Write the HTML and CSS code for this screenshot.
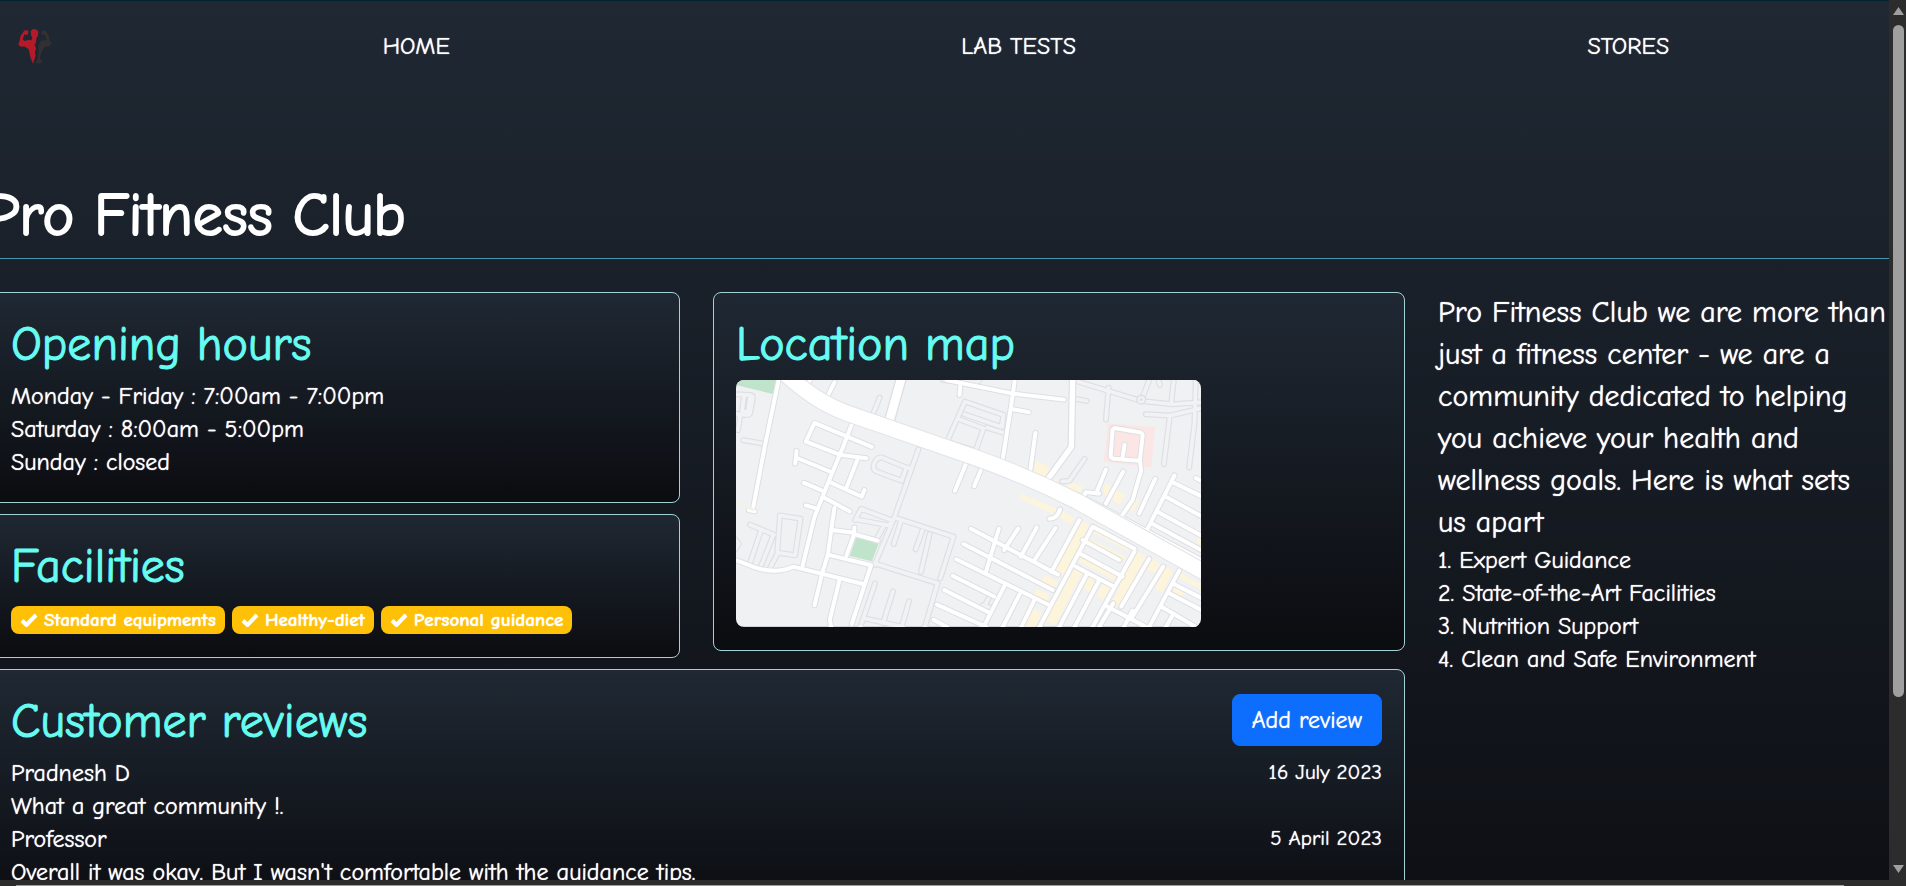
FILE: index.html
```html
<!DOCTYPE html>
<html lang="en">
<head>
<meta charset="utf-8">
<title>Pro Fitness Club</title>
<link rel="stylesheet" href="styles.css">
</head>
<body>
<div class="window">
  <div class="page">
    <nav class="navbar">
      <svg class="logo" viewBox="54 52 102 106" role="img" aria-label="Pro Fitness Club logo">
        <path fill="#b51a28" d="M72 57 L80 55 L85 59 L84 68 L77 70 L73 68 L70 76 L68 84 L74 88 L84 85 L94 86 L97 79 L93 70 L92 58 L99 52 L111 54 L115 61 L114 72 L109 81 L108 94 L104 99 L108 110 L105 124 L107 132 L99 157 L92 140 L88 124 L86 113 L75 106 L61 105 L54 99 L58 90 L61 74 Z"/>
        <path fill="#343031" d="M124 60 L130 56 L139 59 L147 74 L149 84 L155 96 L148 104 L135 106 L128 115 L123 128 L120 140 L127 153 L118 157 L107 154 L112 144 L115 128 L116 116 L115 103 L121 90 L132 86 L140 87 L138 76 L134 69 L126 70 Z"/>
      </svg>
      <div class="nav-links">
        <a href="#home">HOME</a>
        <a href="#tests">LAB TESTS</a>
        <a href="#stores">STORES</a>
      </div>
    </nav>
    <header class="title"><h1>Pro Fitness Club</h1></header>
    <main class="content">
      <div class="stack">
        <section class="card">
          <h2>Opening hours</h2>
          <p>Monday - Friday : 7:00am - 7:00pm</p>
          <p>Saturday : 8:00am - 5:00pm</p>
          <p>Sunday : closed</p>
        </section>
        <section class="card">
          <h2>Facilities</h2>
          <div class="badges">
            <span class="badge"><svg class="check" viewBox="0 0 18 14"><path d="M2 7.500 L6.500 12 L16 2"/></svg>Standard equipments</span>
            <span class="badge"><svg class="check" viewBox="0 0 18 14"><path d="M2 7.500 L6.500 12 L16 2"/></svg>Healthy-diet</span>
            <span class="badge"><svg class="check" viewBox="0 0 18 14"><path d="M2 7.500 L6.500 12 L16 2"/></svg>Personal guidance</span>
          </div>
        </section>
      </div>
      <section class="card">
        <h2>Location map</h2>
        <svg class="map" viewBox="108 299 1398 742" role="img" aria-label="Street map">
          <defs>
            <g id="lanes">
              <path d="M108 342 L152 344 Q160 346 158 358 L150 400 Q148 408 120 402 M132 350 L126 392 L144 396 L150 350 M112 400 L120 410 L114 450 M130 480 L196 491"/>
              <path d="M520 400 L540 352 M740 490 L796 364 L912 404 L906 440 L794 402 M776 416 L852 445 L828 512 L744 486 M862 442 L914 458 M912 404 L908 440"/>
              <path d="M546 532 L620 562 L606 602 L530 574 Q516 566 524 548 Q532 530 546 532 M656 508 L584 712 L524 855 M620 562 L634 566 M466 720 L484 686 L580 722 L566 736 L470 718 M584 712 L762 770 L722 895 M552 738 L528 782 M604 722 L582 792 M668 752 L648 808 M690 762 L664 876"/>
              <path d="M524 850 L714 910 L676 1041 M526 910 L482 1041 M580 934 L550 1030 M628 964 L606 1041 M496 1016 L610 1041 M240 706 L302 716 L286 826 L232 818 L240 706 M150 734 L222 764 M184 748 L150 850 M220 766 L184 856 M108 780 L116 790 L108 806 M232 822 L208 868"/>
              <path d="M1120 299 L1326 362 L1350 299 M1228 322 L1220 418 M1326 362 L1420 372 L1506 366 M1340 402 L1412 406 L1506 384 M1424 299 L1416 370 M1490 299 L1486 430 L1470 562 M1412 406 L1394 552 M1378 299 L1382 314 M1120 354 L1162 362 M1088 604 L1110 602 L1156 536 M730 299 L832 306 L840 299"/>
              <path d="M850 976 L876 984 M870 950 L852 984"/>
            </g>
            <g id="streets">
              <path d="M236 299 L196 491 L160 680 M146 690 L164 694 M330 299 L324 314 M404 306 L382 350"/>
              <path d="M456 432 L428 505 L388 600 L344 710 L308 858 M344 428 L516 500 M344 428 L318 484 L422 524 L500 534 M290 512 L286 550 M288 532 L390 574 M474 536 L440 622 M312 608 L364 630 M390 606 L486 650 L494 630 M368 650 L450 694 M318 676 L346 684"/>
              <path d="M404 684 L396 736 L384 824 L366 884 L344 976 M398 750 L462 758 M464 742 L462 766 L440 826 M462 762 L534 782 M384 824 L514 856 L456 1032 M108 840 L164 862 Q230 884 280 860 L490 912 M418 904 L390 1020 L394 1041"/>
              <path d="M740 299 L940 340 L1094 358 M782 318 L780 344 M946 299 L936 370 L906 560 M936 386 L988 396 M1008 458 L990 590 M798 554 L766 632 M844 570 L824 618"/>
              <path d="M1240 450 Q1242 442 1250 444 L1320 456 Q1332 458 1330 468 L1322 542 L1244 536 Q1234 534 1234 526 Z M1276 494 L1270 532 M1322 542 L1326 570 L1300 660 L1270 704 M1220 568 L1190 640 M1272 574 L1220 670 M1368 596 L1320 700 M1200 640 L1160 636 L1144 660"/>
              <path d="M1426 586 L1340 756 M1420 606 L1506 648 M1400 650 L1506 708 M1376 696 L1506 766 M1358 730 L1506 810 M1490 594 L1506 602 M1160 656 L1506 840"/>
              <path d="M814 746 L1076 884 M792 792 L1060 930 M770 838 L1050 976 M760 888 L884 950 M734 930 L868 998 M712 974 L860 1041 M702 1020 L742 1041 M898 746 L858 880 M956 746 L914 810 M1012 742 L964 830 M1068 744 L1004 842"/>
              <path d="M914 920 L852 1041 M960 944 L910 1041 M1004 962 L966 1041 M1180 740 L1020 1041 M1140 720 L1056 876 M1150 780 L1260 840 M1140 820 L1270 890 M1130 860 L1240 918 M1306 814 L1180 1041 M1164 880 L1080 1041 M1200 900 L1126 1041"/>
              <path d="M1350 836 L1266 980 M1392 860 L1300 1010 M1440 872 L1350 1041 M1184 742 L1306 806 M1224 980 L1340 1041 M1424 912 L1506 954 M1410 940 L1506 990 M1386 980 L1490 1041 M1418 1010 L1400 1041 M1242 970 L1200 1041 M1300 992 L1274 1041 M1050 716 Q1074 716 1082 688"/>
            </g>
          </defs>
          <rect x="108" y="299" width="1398" height="742" fill="#f0f1f3"/>
          <path fill="#c0e3cb" d="M108 299 H230 L222 342 L108 314 Z M470 772 L538 788 L516 844 L450 828 Z"/>
          <path fill="#fbe6e5" d="M1226 430 L1368 440 L1356 562 L1214 544 Z"/>
          <path fill="#fdf4dc" d="M1012 542 L1052 562 L1038 598 L996 584 Z M962 640 L1070 686 L1060 702 L962 656 Z M1062 596 L1088 612 L1078 628 L1050 614 Z M1110 606 L1150 620 L1132 650 L1100 632 Z M1218 608 L1236 618 L1222 648 L1212 638 Z M1250 630 L1278 644 L1260 674 L1240 660 Z M1296 650 L1320 660 L1302 694 L1282 682 Z M1160 648 L1260 700 L1246 712 L1150 660 Z M1278 710 L1334 740 L1320 756 L1268 726 Z M1350 752 L1506 832 V862 L1344 772 Z M1086 694 L1126 714 L1112 730 L1084 714 Z M1146 722 L1170 734 L1094 884 L1064 872 Z M1190 742 L1300 798 L1286 814 L1184 758 Z M1172 776 L1280 830 L1266 852 L1162 796 Z M1150 820 L1260 876 L1244 900 L1138 844 Z M1128 862 L1150 874 L1068 1036 L1038 1026 Z M1310 814 L1340 828 L1260 980 L1236 970 Z M1036 884 L1076 904 L1062 924 L1026 906 Z M1012 926 L1052 946 L1042 966 L1002 946 Z M1168 880 L1190 896 L1170 936 L1150 924 Z M1212 908 L1234 918 L1212 960 L1192 948 Z M1358 838 L1384 852 L1366 880 L1344 870 Z M1398 860 L1422 872 L1390 936 L1368 928 Z M1446 880 L1506 912 V928 L1440 894 Z M1430 916 L1458 932 L1448 952 L1420 940 Z M996 984 L1028 998 L1008 1041 H974 Z M1496 774 L1506 780 V808 L1490 798 Z"/>
          <use href="#lanes" class="casing"/>
          <use href="#lanes" class="lane"/>
          <use href="#streets" class="casing"/>
          <path class="casing avenue-edge" d="M606 290 L564 440"/>
          <path class="casing bend-edge" d="M1120 290 L1116 500 L1036 610"/>
          <use href="#streets" class="street"/>
          <path class="avenue" d="M606 290 L564 440"/>
          <path class="bend" d="M1120 290 L1116 500 L1036 610"/>
          <path class="highway-edge" d="M256 280 Q350 366 440 398 L820 530 Q980 586 1130 662 L1530 884"/>
          <path class="highway" d="M256 280 Q350 366 440 398 L820 530 Q980 586 1130 662 L1530 884"/>
          <path fill="none" stroke="#f5f1e6" stroke-width="7" d="M108 664 L160 690"/>
          <circle cx="1326" cy="358" r="13" fill="#f1f2f4" stroke="#dcdde1" stroke-width="4"/>
          <circle cx="1326" cy="358" r="4" fill="#dcdde1"/>
        </svg>
      </section>
      <section class="card reviews">
        <div class="reviews-head">
          <h2>Customer reviews</h2>
          <button type="button" class="add">Add review</button>
        </div>
        <article>
          <div class="review-line"><p>Pradnesh D</p><time datetime="2023-07-16">16 July 2023</time></div>
          <p>What a great community !.</p>
        </article>
        <article>
          <div class="review-line"><p>Professor</p><time datetime="2023-04-05">5 April 2023</time></div>
          <p>Overall it was okay. But I wasn't comfortable with the guidance tips.</p>
        </article>
      </section>
      <aside class="about">
        <p class="lead">Pro Fitness Club we are more than just a fitness center - we are a community dedicated to helping you achieve your health and wellness goals. Here is what sets us&nbsp;apart</p>
        <p>1. Expert Guidance</p>
        <p>2. State-of-the-Art Facilities</p>
        <p>3. Nutrition Support</p>
        <p>4. Clean and Safe Environment</p>
      </aside>
    </main>
  </div>
  <div class="scroll-y">
    <svg class="arrow" viewBox="0 0 13 10"><path d="M6.500 1 L12 9 H1 Z"/></svg>
    <div class="track"><div class="thumb"></div></div>
    <svg class="arrow" viewBox="0 0 13 10"><path d="M6.500 9 L12 1 H1 Z"/></svg>
  </div>
  <div class="scroll-x"><div class="thumb-x"></div></div>
</div>
</body>
</html>
```
FILE: styles.css
```css
* { box-sizing: border-box; }

body {
  margin: 0;
  background: #2c2c2c;
  color: #fff;
  font-family: "Comic Sans MS", "Comic Neue", "Noto Sans", sans-serif;
  font-size: 24px;
  line-height: 33px;
  font-variant-ligatures: none;
  text-shadow: 0 0 1px #fff;
}

h1, h2, p { margin: 0; font-weight: 400; }
h1, h2 { text-shadow: none; }

.window {
  display: grid;
  grid-template-columns: minmax(0, 1fr) 17px;
  grid-template-rows: minmax(0, 1fr) 6px;
  height: 100vh;
}

.page {
  overflow: hidden;
  border-top: 1px solid #04222f;
  background: linear-gradient(#1f2833, #0e1015);
}

.navbar {
  display: flex;
  align-items: center;
  gap: 75px;
  height: 90px;
  padding-left: 18px;
}

.logo { flex: none; width: 34px; height: 35px; }

.nav-links {
  flex: 1;
  display: flex;
  justify-content: space-around;
  margin-right: -36px;
}

.nav-links a { color: #fff; text-decoration: none; }

.title {
  margin-left: -14px;
  padding: 90px 0 7px;
  border-bottom: 1px solid #4597ad;
}

.title h1 { font-size: 60px; line-height: 70px; -webkit-text-stroke: 2px #fff; }

.content {
  display: grid;
  grid-template-columns: minmax(0, 692fr) minmax(0, 692fr) minmax(0, 451fr);
  align-items: start;
  gap: 11px 33px;
  margin: 33px 0 0 -12px;
}

.stack { display: grid; gap: 11px; }

.card {
  padding: 24px 22px 23px;
  border: 1px solid #a3d2d6;
  border-radius: 8px;
  background: linear-gradient(#1f2833, #0b0c10);
}

h2 {
  margin-bottom: 8px;
  color: #66fcf1;
  font-size: 48px;
  line-height: 55px;
  -webkit-text-stroke: 1px #66fcf1;
}

.badges { display: flex; gap: 7px; padding-top: 4px; }

.badge {
  display: flex;
  align-items: center;
  gap: 6px;
  padding: 0 9px;
  border-radius: 8px;
  background: #ffc107;
  font-size: 19px;
  font-weight: 700;
  line-height: 28px;
  white-space: nowrap;
}

.check { width: 18px; height: 14px; fill: none; stroke: #fff; stroke-width: 4; }

.map { display: block; width: 72%; border-radius: 8px; fill: none; stroke-linecap: round; stroke-linejoin: round; }
.casing { stroke: #dedfe3; stroke-width: 18px; }
.lane { stroke: #f1f2f4; stroke-width: 11px; }
.street { stroke: #fff; stroke-width: 12px; }
.avenue-edge { stroke-width: 34px; }
.avenue { stroke: #fff; stroke-width: 26px; }
.bend-edge { stroke-width: 23px; }
.bend { stroke: #fff; stroke-width: 16px; }
.highway-edge { stroke: #e1e2e6; stroke-width: 52px; }
.highway { stroke: #fff; stroke-width: 46px; }

.reviews { grid-column: 1 / 3; }
.reviews-head, .review-line { display: flex; justify-content: space-between; align-items: flex-start; }
.review-line time { font-size: 21px; line-height: 30px; }

.add {
  padding: 9px 19px;
  border: 1px solid #0d6efd;
  border-radius: 8px;
  background: #0d6efd;
  color: #fff;
  font: inherit;
  line-height: 32px;
  text-shadow: inherit;
}

.about { grid-column: 3; grid-row: 1 / 3; }
.lead { font-size: 30px; line-height: 42px; }

.scroll-y {
  display: flex;
  flex-direction: column;
  align-items: center;
  padding: 6px 0 6px 1px;
}

.arrow { width: 13px; height: 10px; fill: #9f9f9f; }
.track { flex: 1; width: 11px; padding: 9px 0; }
.thumb { height: 81%; border-radius: 6px; background: #9f9f9f; }

.scroll-x { display: flex; align-items: flex-end; padding: 0 45px 0 16px; }
.thumb-x { flex: 1; height: 1px; background: #9f9f9f; }
```
